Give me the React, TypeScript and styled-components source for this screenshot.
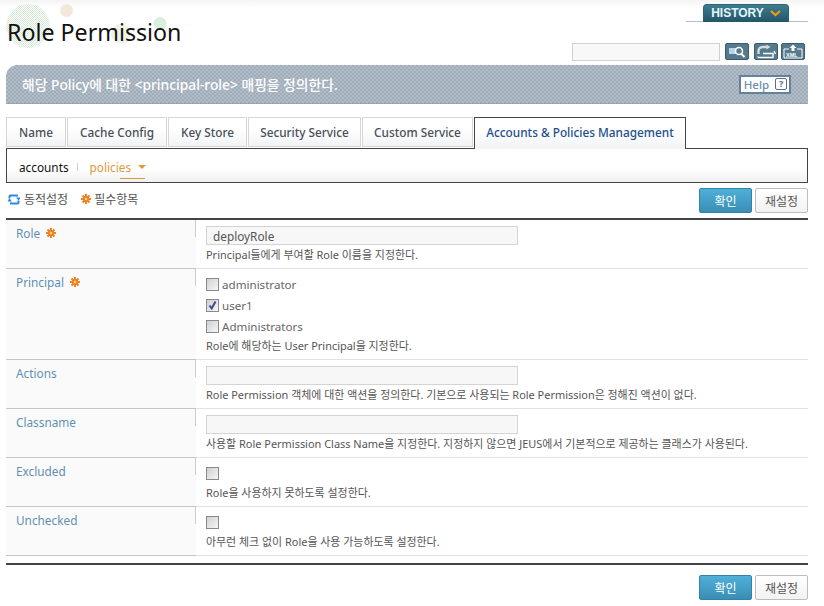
import React from "react";
import styled, { createGlobalStyle } from "styled-components";

const Global = createGlobalStyle`
  html, body { margin: 0; padding: 0; background: #fff; }
  body { font-family: "Noto Sans", "Noto Sans CJK KR", sans-serif; font-size: 12px; color: #555; }
  * { box-sizing: border-box; }
`;

const Page = styled.div`
  width: 824px;
  height: 606px;
  overflow: hidden;
  padding: 0 16px 0 6px;
  background: linear-gradient(#f4f4f4, #fff 8px);
`;
const Header = styled.header`
  height: 65px;
  display: flex;
  justify-content: space-between;
  position: relative;
`;
const Deco = styled.svg`
  position: absolute;
  left: -6px;
  top: 0;
`;
const Title = styled.h1`
  position: relative;
  margin: 16px 0 0 1px;
  font-size: 23.2px;
  line-height: 32px;
  font-weight: 400;
  color: #111;
  font-family: "Noto Sans", sans-serif;
  height: 32px;
`;
const HeaderRight = styled.div`
  display: flex;
  flex-direction: column;
  align-items: flex-end;
`;
const HistoryWrap = styled.div`
  width: 122px;
  height: 18px;
  margin-top: 4px;
  display: flex;
  justify-content: center;
  border-bottom: 1px solid #a9c6cf;
`;
const HistoryTab = styled.div`
  width: 86px;
  height: 18px;
  margin-left: -2px;
  border-radius: 4px 4px 0 0;
  background: linear-gradient(#3d7d90, #235468);
  border: 1px solid #2e6273;
  border-bottom: 0;
  color: #e4f6fa;
  font: 700 12px/17px "Liberation Sans", sans-serif;
  display: flex;
  align-items: center;
  justify-content: center;
  gap: 6px;
`;
const Tools = styled.div`
  margin-top: 21px;
  height: 18px;
  display: flex;
  align-items: flex-start;
  margin-right: 3px;
`;
const SearchBox = styled.div`
  width: 148px;
  height: 18px;
  background: #f8f8f8;
  border: 1px solid #d0d0d0;
`;
const ToolBtn = styled.div<{ $gap: number }>`
  width: 24px;
  height: 17px;
  margin-left: ${(p) => p.$gap}px;
  border-radius: 2px;
  background: #557a8d;
  border: 1px solid #3d5c6b;
  display: flex;
`;
const XmlText = styled.text`
  font: 700 5.5px "Liberation Sans", sans-serif;
  fill: #fff;
`;
const Banner = styled.div`
  height: 39px;
  border-radius: 12px 0 0 0;
  display: flex;
  align-items: center;
  justify-content: space-between;
  padding: 0 17px 0 16px;
  background-color: #a7b3bf;
  background-image: repeating-conic-gradient(#9eabb8 0 25%, #b2bdc8 0 50%);
  background-size: 4px 4px;
  color: #fff;
  font-size: 13.8px;
  font-weight: 500;
  border-bottom: 1px solid #98a4b0;
`;
const HelpBtn = styled.div`
  width: 52px;
  height: 19px;
  background: #fff;
  border: 2px solid #64829e;
  color: #6d8cb0;
  font-size: 11.5px;
  display: flex;
  align-items: center;
  justify-content: center;
  gap: 6px;
  padding-left: 1px;
`;
const QBox = styled.span`
  width: 12px;
  height: 12px;
  border: 1px solid #55708c;
  border-radius: 2px;
  font-size: 9px;
  font-weight: 700;
  line-height: 10px;
  text-align: center;
  color: #55708c;
`;
const Tabs = styled.nav`
  margin-top: 13px;
  height: 31px;
  display: flex;
  position: relative;
  z-index: 1;
`;
const Tab = styled.div<{ $w: number; $active?: boolean }>`
  width: ${(p) => p.$w}px;
  margin-right: 1px;
  height: ${(p) => (p.$active ? 32 : 30)}px;
  background: linear-gradient(#fff 40%, #f0f2f4);
  border: 1px solid ${(p) => (p.$active ? "#444" : "#d6d6d6")};
  ${(p) => p.$active && "border-bottom: 0;"}
  color: ${(p) => (p.$active ? "#1b4f8e" : "#474f58")};
  font-size: 11.8px;
  font-weight: 500;
  text-align: center;
  line-height: 29px;
`;
const SubBar = styled.div`
  height: 35px;
  border: 1px solid #444;
  background: linear-gradient(#fff 60%, #f0f0f0);
  display: flex;
  align-items: center;
  padding: 3px 0 0 12px;
  font-size: 11.8px;
`;
const SubActive = styled.span`
  color: #111;
`;
const SubSep = styled.span`
  width: 1px;
  height: 8px;
  background: #ccc;
  margin: 0 12px 0 8px;
`;
const SubLink = styled.span`
  color: #dd9a3c;
  display: flex;
  align-items: center;
  gap: 6px;
  position: relative;
  height: 22px;
`;
const SubUnderline = styled.i`
  position: absolute;
  left: 30px;
  bottom: -1px;
  width: 25px;
  height: 1px;
  background: #dd9a3c;
`;
const Caret = styled.i`
  width: 0;
  height: 0;
  border: 4px solid transparent;
  border-top: 4px solid #dd9a3c;
  border-bottom: 0;
  margin-left: 1px;
`;
const ActionBar = styled.div`
  height: 35px;
  display: flex;
  justify-content: space-between;
  align-items: flex-start;
`;
const Legend = styled.div`
  display: flex;
  align-items: center;
  gap: 13px;
  margin: 7px 0 0 2px;
  font-size: 12px;
  color: #555;
`;
const LegendItem = styled.span`
  display: flex;
  align-items: center;
  gap: 3px;
`;
const SyncIcon = styled.svg`
  margin-right: 1px;
`;
const GearIcon = styled.svg`
  margin-top: 3px;
`;
const LegendGear = styled(GearIcon)`
  margin-top: 0;
`;
const Buttons = styled.div`
  display: flex;
  gap: 3px;
  margin-top: 5px;
`;
const OkBtn = styled.button`
  width: 53px;
  height: 25px;
  padding: 0;
  border: 1px solid #2f83a8;
  border-radius: 2px;
  background: linear-gradient(#4fb0d8, #3b8db5);
  color: #fff;
  font: 12px "Noto Sans CJK KR", sans-serif;
`;
const ResetBtn = styled.button`
  width: 53px;
  height: 25px;
  padding: 0;
  border: 1px solid #bdbdbd;
  border-radius: 2px;
  background: linear-gradient(#fff, #f2f2f2);
  color: #555;
  font: 12px "Noto Sans CJK KR", sans-serif;
`;
const Table = styled.div`
  border-top: 2px solid #444;
`;
const Row = styled.div<{ $h: number }>`
  height: ${(p) => p.$h}px;
  display: grid;
  grid-template-columns: 190px 1fr;
  border-bottom: 1px solid #e2e2e2;
`;
const LabelCell = styled.div`
  background: #fafafa;
  border-bottom: 1px solid #c6c6c6;
  margin-bottom: -1px;
  padding: 5px 0 0 10px;
  color: #5f90b4;
  font-size: 11.8px;
  font-weight: 400;
  display: flex;
  align-items: flex-start;
  gap: 6px;
  position: relative;
  line-height: 17px;
`;
const Divider = styled.i`
  position: absolute;
  right: 0;
  top: 0;
  width: 1px;
  height: 17px;
  background: #ccc;
`;
const ValueCell = styled.div`
  padding: 6px 0 0 10px;
  display: flex;
  flex-direction: column;
`;
const TextInput = styled.div`
  width: 312px;
  height: 19px;
  background: #f7f7f7;
  border: 1px solid #d4d4d4;
  padding-left: 6px;
  color: #555;
  font-size: 11.8px;
  line-height: 18px;
`;
const Desc = styled.div`
  font-size: 10.95px;
  line-height: 16px;
  margin-top: 2px;
  color: #555;
`;
const CheckList = styled.div`
  margin: -1px 0 -1px;
  display: flex;
  flex-direction: column;
`;
const CheckRow = styled.div`
  display: flex;
  align-items: center;
  gap: 3px;
  height: 21px;
  font-size: 11.6px;
  color: #666;
`;
const Box = styled.span`
  width: 13px;
  height: 13px;
  border: 1px solid #8a8a8a;
  background: linear-gradient(135deg, #d0d0d0, #f6f6f6);
  display: flex;
  align-items: center;
  justify-content: center;
`;
const LoneBox = styled(Box)`
  margin-top: 3px;
  margin-bottom: 3px;
`;
const BottomRule = styled.div`
  border-top: 2px solid #444;
  margin-top: 7px;
`;
const BottomBar = styled.div`
  display: flex;
  justify-content: flex-end;
  margin-top: 5px;
`;

const gearPaths = (
  <>
    <g stroke="#f08020" strokeWidth="2">
      <path d="M5 0v10M0 5h10M1.5 1.5l7 7M8.5 1.5l-7 7" />
    </g>
    <circle cx="5" cy="5" r="3" fill="#f08020" />
    <circle cx="5" cy="5" r="1.2" fill="#ffd9a8" />
  </>
);

const Gear = () => (
  <GearIcon width="10" height="10" viewBox="0 0 10 10">
    {gearPaths}
  </GearIcon>
);

const Req = () => (
  <LegendGear width="10" height="10" viewBox="0 0 10 10">
    {gearPaths}
  </LegendGear>
);

const Sync = () => (
  <SyncIcon width="12" height="11" viewBox="0 0 12 11" fill="none" stroke="#2a8ae0" strokeWidth="2">
    <path d="M1.5 4.5V2.5a1 1 0 0 1 1-1h7.5" />
    <path d="M10.5 6.5v2a1 1 0 0 1-1 1H2" />
    <path d="M10.5 6.5L8 3.5h5z" fill="#2a8ae0" stroke="none" />
    <path d="M1.5 4.5L-1 7.5h5z" fill="#2a8ae0" stroke="none" />
  </SyncIcon>
);

const Check = () => (
  <svg width="11" height="11" viewBox="0 0 11 11" fill="none" stroke="#3a4a90" strokeWidth="2">
    <path d="M2.5 5.5l2.2 3L8.5 1.5" />
  </svg>
);

const FieldRow = ({ label, req, h, children }: { label: string; req?: boolean; h: number; children: React.ReactNode }) => (
  <Row $h={h}>
    <LabelCell>
      {label}
      {req && <Gear />}
      <Divider />
    </LabelCell>
    <ValueCell>{children}</ValueCell>
  </Row>
);

export default function App() {
  return (
    <Page>
      <Global />
      <Header>
        <Deco width="180" height="50">
          <defs>
            <pattern id="dots" width="2" height="2" patternUnits="userSpaceOnUse">
              <rect width="1" height="1" fill="#d6ecd6" />
              <rect x="1" y="1" width="1" height="1" fill="#d6ecd6" />
            </pattern>
          </defs>
          <circle cx="28" cy="26" r="22" fill="url(#dots)" />
          <circle cx="66.5" cy="10.5" r="6.5" fill="#f3e6da" />
          <circle cx="121" cy="34" r="10" fill="#eef5e4" />
          <circle cx="160" cy="23.5" r="6.5" fill="#dcefdc" />
        </Deco>
        <Title>Role Permission</Title>
        <HeaderRight>
          <HistoryWrap>
            <HistoryTab>
              HISTORY
              <svg width="11" height="7" viewBox="0 0 11 7" fill="none" stroke="#f59a10" strokeWidth="2.2">
                <path d="M1 1l4.5 4L10 1" />
              </svg>
            </HistoryTab>
          </HistoryWrap>
          <Tools>
            <SearchBox />
            <ToolBtn $gap={5}>
              <svg width="22" height="15" viewBox="0 0 22 15" fill="none">
                <rect x="3" y="4" width="9" height="6" fill="#b8d4ea" />
                <circle cx="13" cy="7" r="3.5" stroke="#fff" strokeWidth="1.6" fill="#557a8d" />
                <path d="M15.5 10l3 3" stroke="#fff" strokeWidth="2" />
              </svg>
            </ToolBtn>
            <ToolBtn $gap={5}>
              <svg width="22" height="15" viewBox="0 0 22 15" fill="none" stroke="#fff" strokeWidth="1.4">
                <path d="M3.5 10V7a4 4 0 0 1 4-4h5" strokeWidth="2.4" stroke="#d8d8d8" />
                <path d="M11.5 0.5l4 2.5-4 2.5z" fill="#d8d8d8" stroke="none" />
                <path d="M8 9.5h10v4H4a1 1 0 0 1-1-1" />
                <path d="M19 7l1.5 3" />
              </svg>
            </ToolBtn>
            <ToolBtn $gap={3}>
              <svg width="22" height="15" viewBox="0 0 22 15" fill="none">
                <path d="M7 5H2v9h18V5h-5" stroke="#fff" />
                <path d="M11 0.5l3.5 3.5h-2v3h-3V4h-2z" fill="#fff" />
                <XmlText x="4" y="12.5">XML</XmlText>
              </svg>
            </ToolBtn>
          </Tools>
        </HeaderRight>
      </Header>
      <Banner>
        <span>해당 Policy에 대한 &lt;principal-role&gt; 매핑을 정의한다.</span>
        <HelpBtn>
          Help <QBox>?</QBox>
        </HelpBtn>
      </Banner>
      <Tabs>
        <Tab $w={60}>Name</Tab>
        <Tab $w={100}>Cache Config</Tab>
        <Tab $w={79}>Key Store</Tab>
        <Tab $w={113}>Security Service</Tab>
        <Tab $w={111}>Custom Service</Tab>
        <Tab $w={212} $active>
          Accounts &amp; Policies Management
        </Tab>
      </Tabs>
      <SubBar>
        <SubActive>accounts</SubActive>
        <SubSep />
        <SubLink>
          policies
          <Caret />
          <SubUnderline />
        </SubLink>
      </SubBar>
      <ActionBar>
        <Legend>
          <LegendItem>
            <Sync />
            동적설정
          </LegendItem>
          <LegendItem>
            <Req />
            필수항목
          </LegendItem>
        </Legend>
        <Buttons>
          <OkBtn>확인</OkBtn>
          <ResetBtn>재설정</ResetBtn>
        </Buttons>
      </ActionBar>
      <Table>
        <FieldRow label="Role" req h={49}>
          <TextInput>deployRole</TextInput>
          <Desc>Principal들에게 부여할 Role 이름을 지정한다.</Desc>
        </FieldRow>
        <FieldRow label="Principal" req h={91}>
          <CheckList>
            <CheckRow>
              <Box />
              administrator
            </CheckRow>
            <CheckRow>
              <Box>
                <Check />
              </Box>
              user1
            </CheckRow>
            <CheckRow>
              <Box />
              Administrators
            </CheckRow>
          </CheckList>
          <Desc>Role에 해당하는 User Principal을 지정한다.</Desc>
        </FieldRow>
        <FieldRow label="Actions" h={49}>
          <TextInput />
          <Desc>Role Permission 객체에 대한 액션을 정의한다. 기본으로 사용되는 Role Permission은 정해진 액션이 없다.</Desc>
        </FieldRow>
        <FieldRow label="Classname" h={49}>
          <TextInput />
          <Desc>사용할 Role Permission Class Name을 지정한다. 지정하지 않으면 JEUS에서 기본적으로 제공하는 클래스가 사용된다.</Desc>
        </FieldRow>
        <FieldRow label="Excluded" h={49}>
          <LoneBox />
          <Desc>Role을 사용하지 못하도록 설정한다.</Desc>
        </FieldRow>
        <FieldRow label="Unchecked" h={49}>
          <LoneBox />
          <Desc>아무런 체크 없이 Role을 사용 가능하도록 설정한다.</Desc>
        </FieldRow>
      </Table>
      <BottomRule />
      <BottomBar>
        <Buttons>
          <OkBtn>확인</OkBtn>
          <ResetBtn>재설정</ResetBtn>
        </Buttons>
      </BottomBar>
    </Page>
  );
}
